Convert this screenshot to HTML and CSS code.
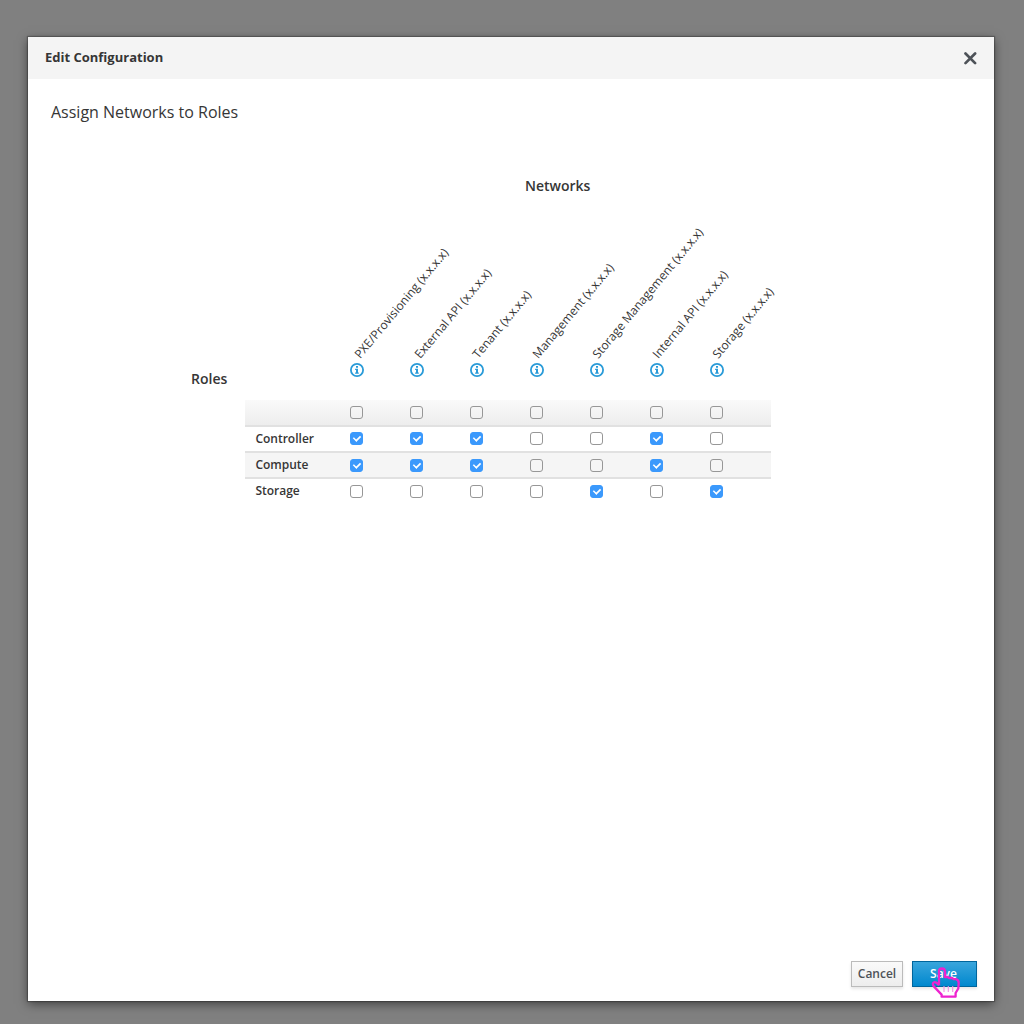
FILE: index.html
```html
<!DOCTYPE html>
<html lang="en">
<head>
<meta charset="utf-8">
<title>Edit Configuration</title>
<link rel="stylesheet" href="styles.css">
</head>
<body>
<svg class="defs" width="0" height="0" aria-hidden="true">
  <symbol id="info" viewBox="0 0 14 14">
    <circle cx="7" cy="7" r="6.1" fill="none" stroke="#2a9bd8" stroke-width="1.8"/>
    <path d="M6 3.1h2v1.7H6zM5.1 5.8h2.9v3.7h.8v1.2H5.1V9.5H6V7h-.9z" fill="#2a9bd8"/>
  </symbol>
</svg>
<main class="modal">
  <header class="modal-header">
    <h1 class="modal-title">Edit Configuration</h1>
    <svg class="close" width="14" height="14" viewBox="0 0 14 14"><path d="M2.5 2.5l9.6 9.6M12.1 2.5L2.5 12.1" fill="none" stroke="#4d5258" stroke-width="2.7" stroke-linecap="round"/></svg>
  </header>
  <section class="modal-body">
    <h2 class="subtitle">Assign Networks to Roles</h2>
    <h3 class="networks-title">Networks</h3>
    <div class="matrix">
      <h3 class="roles-title">Roles</h3>
      <div class="table">
        <div class="row heads">
          <span></span>
          <div class="head"><span class="label">PXE/Provisioning (x.x.x.x)</span><svg class="info"><use href="#info"/></svg></div>
          <div class="head"><span class="label">External API (x.x.x.x)</span><svg class="info"><use href="#info"/></svg></div>
          <div class="head"><span class="label">Tenant (x.x.x.x)</span><svg class="info"><use href="#info"/></svg></div>
          <div class="head"><span class="label">Management (x.x.x.x)</span><svg class="info"><use href="#info"/></svg></div>
          <div class="head"><span class="label">Storage Management (x.x.x.x)</span><svg class="info"><use href="#info"/></svg></div>
          <div class="head"><span class="label">Internal API (x.x.x.x)</span><svg class="info"><use href="#info"/></svg></div>
          <div class="head"><span class="label">Storage (x.x.x.x)</span><svg class="info"><use href="#info"/></svg></div>
        </div>
        <div class="row all"><span></span><input type="checkbox"><input type="checkbox"><input type="checkbox"><input type="checkbox"><input type="checkbox"><input type="checkbox"><input type="checkbox"></div>
        <div class="row controller"><span class="role">Controller</span><input type="checkbox" checked><input type="checkbox" checked><input type="checkbox" checked><input type="checkbox"><input type="checkbox"><input type="checkbox" checked><input type="checkbox"></div>
        <div class="row striped"><span class="role">Compute</span><input type="checkbox" checked><input type="checkbox" checked><input type="checkbox" checked><input type="checkbox"><input type="checkbox"><input type="checkbox" checked><input type="checkbox"></div>
        <div class="row last"><span class="role">Storage</span><input type="checkbox"><input type="checkbox"><input type="checkbox"><input type="checkbox"><input type="checkbox" checked><input type="checkbox"><input type="checkbox" checked></div>
      </div>
    </div>
  </section>
  <footer class="modal-footer">
    <button class="btn">Cancel</button>
    <button class="btn primary">Save
      <svg class="cursor" width="30" height="34" viewBox="0 0 30 34">
        <path d="M8 19.2V5.6Q8 2.5 11 2.5T14 5.6V11L16.5 10.9 18.2 12 21 11.9 22.6 13.2 25 13.2Q27.8 14 27.7 17L27.3 22.5 24.6 27V30.7H10.6V28.6L2.8 20.4Q.9 17.4 2.8 16.4T8 19.2" fill="none" stroke="#ee22cf" stroke-width="2.3" stroke-linejoin="round"/>
        <path d="M13 20v6M17.3 20v6M21.7 20v6" fill="none" stroke="#f38de5" stroke-width="1.1"/>
      </svg>
    </button>
  </footer>
</main>
</body>
</html>
```
FILE: styles.css
```css
* { box-sizing: border-box; }
body {
  margin: 0;
  height: 1024px;
  padding: 37px 30px 23px 28px;
  background: #808080;
  color: #363636;
  font-family: "Open Sans", sans-serif;
  overflow: hidden;
}
.defs { position: absolute; }
h1, h2, h3 { margin: 0; }
.modal {
  height: 964px;
  display: flex;
  flex-direction: column;
  background: #fff;
  box-shadow: 0 0 1px 1px rgba(0,0,0,.25), 0 3px 10px rgba(0,0,0,.5);
}
.modal-header {
  height: 42px;
  padding: 0 17px;
  display: flex;
  align-items: center;
  justify-content: space-between;
  background: #f4f4f4;
}
.modal-title { padding-bottom: 2px; font-size: 13px; line-height: 18px; font-weight: 700; }
.close { display: block; }
.modal-body { flex: 1; padding: 21px 0 0 23px; }
.subtitle { font-size: 16px; line-height: 24px; font-weight: 400; }
.networks-title {
  margin: 52px 0 0 474px;
  font-size: 14px;
  line-height: 20px;
  font-weight: 600;
}
.matrix { display: flex; padding-left: 140px; }
.roles-title {
  width: 54px;
  padding-top: 173px;
  font-size: 14px;
  line-height: 20px;
  font-weight: 600;
}
.table { width: 526px; }
.row {
  display: grid;
  grid-template-columns: 105px repeat(7, 60px);
  align-items: center;
  height: 26px;
  border-bottom: 2px solid #e1e1e1;
}
.heads { height: 204px; align-items: end; border: 0; }
.head { display: flex; flex-direction: column; padding-bottom: 23px; }
.label {
  width: 0;
  margin: 0 0 .5px 10.5px;
  font-size: 12px;
  line-height: 16px;
  white-space: nowrap;
  transform-origin: 0 13px;
  transform: rotate(-50.2deg);
}
.head:nth-child(n+4) .label { margin-left: 9.3px; }
.info { display: block; width: 14px; height: 14px; }
.all { background: linear-gradient(#fafafa, #ededed); height: 27px; }
.striped { background: #f5f5f5; }
.last { height: 24px; border: 0; }
.role { padding-left: 10.4px; font-size: 12px; line-height: 18px; font-weight: 600; }
input {
  appearance: none;
  width: 13px;
  height: 13px;
  margin: 0;
  border: 1px solid #979797;
  border-radius: 3px;
  position: relative;
}
.controller input { margin-bottom: 2px; }
input:checked { background: #3b99fc; border-color: #3b99fc; }
input:checked::after {
  content: "";
  position: absolute;
  left: 2px;
  top: 2px;
  width: 7px;
  height: 4px;
  border: solid #fff;
  border-width: 0 0 2px 2px;
  transform: translate(-.5px, -.4px) rotate(-45deg) scale(.76, .85);
}
.modal-footer { display: flex; justify-content: flex-end; gap: 9px; padding: 0 17px 14px; }
.btn {
  width: 52px;
  height: 26px;
  padding: 0;
  border: 1px solid #bbb;
  background: linear-gradient(#fafafa, #ededed);
  box-shadow: 0 2px 3px rgba(3,3,3,.1);
  color: #4d5258;
  font: 600 12px/22px "Open Sans", sans-serif;
}
.primary {
  position: relative;
  width: 65px;
  padding-right: 2px;
  border-color: #00659c;
  background: linear-gradient(#39a5dc, #0088ce);
  color: #fff;
}
.cursor { position: absolute; left: 18px; top: 4px; }
```
